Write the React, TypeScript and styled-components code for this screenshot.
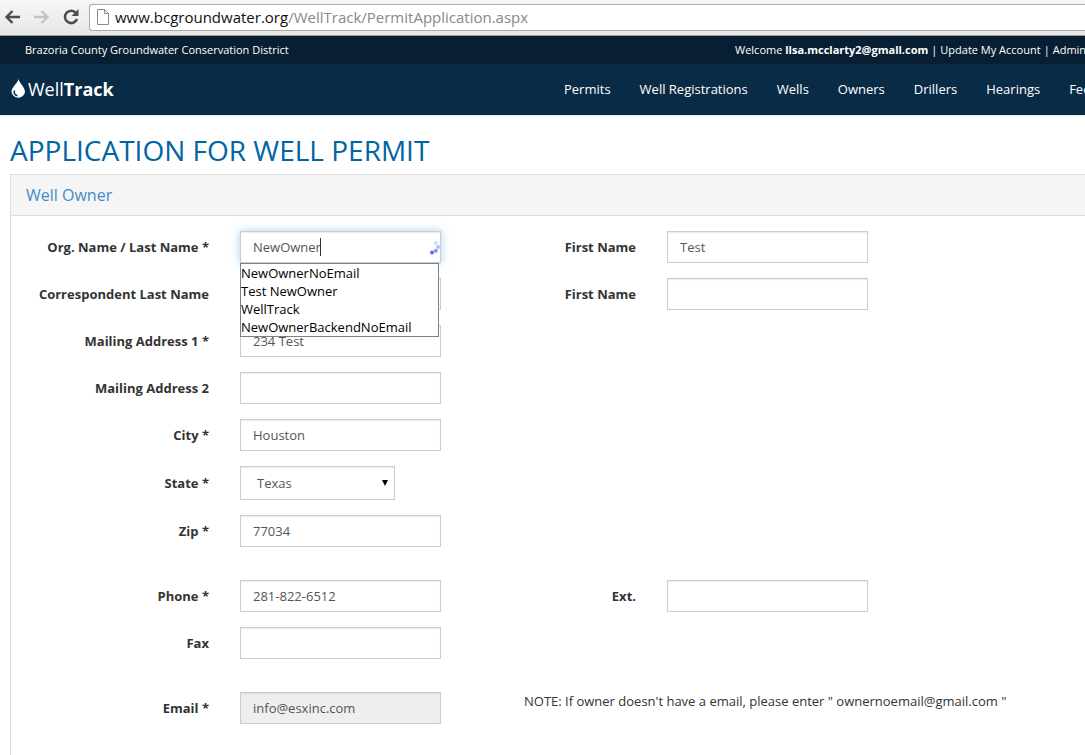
import React from "react";
import styled, { createGlobalStyle, css } from "styled-components";

const GlobalStyle = createGlobalStyle`
  * { box-sizing: border-box; }
  html, body { margin: 0; padding: 0; }
  body {
    font-family: "Open Sans", "Noto Sans", sans-serif;
    font-size: 13px;
    line-height: 20px;
    color: #333;
    background: #fff;
    overflow-x: hidden;
  }
`;

const Page = styled.div`
  display: flex;
  flex-direction: column;
  min-height: 100vh;
  overflow: hidden;
`;

const BrowserBar = styled.div`
  display: flex;
  align-items: center;
  height: 36px;
  padding: 0 0 1px 4px;
  background: linear-gradient(#f7f7f7, #e6e6e6);
  border-bottom: 1px solid #a0a0a0;
`;

const ToolButton = styled.button`
  display: flex;
  align-items: center;
  justify-content: center;
  width: 18px;
  height: 20px;
  margin-right: 11px;
  padding: 0;
  border: 0;
  background: none;
`;

const AddressBox = styled.div`
  display: flex;
  flex: 1;
  align-items: center;
  gap: 6px;
  height: 27px;
  margin-left: -2px;
  padding-left: 7px;
  background: #fff;
  border: 1px solid #aaa;
  border-right: 0;
  border-radius: 3px 0 0 3px;
`;

const Address = styled.div`
  font-size: 15px;
  color: #888;
  white-space: nowrap;

  b {
    font-weight: 400;
    color: #111;
  }
`;

const TopBar = styled.div`
  display: flex;
  align-items: center;
  height: 28px;
  padding-left: 25px;
  font-size: 11px;
  color: #fff;
  background: #081f33;
  white-space: nowrap;
`;

const District = styled.div`
  flex: 0 0 710px;
`;

const Account = styled.div`
  display: flex;
  flex: none;
  gap: 3px;
`;

const PlainLink = styled.a`
  color: inherit;
  text-decoration: none;
`;

const Header = styled.header`
  display: flex;
  align-items: center;
  height: 51px;
  padding: 0 0 2px 10px;
  color: #fff;
  background: #0a2b46;
`;

const Brand = styled.a`
  display: flex;
  flex: 0 0 554px;
  align-items: center;
  gap: 2px;
  font-size: 18px;
  color: #fff;
  text-decoration: none;
`;

const Nav = styled.nav`
  display: flex;
  flex: none;
  gap: 29px;
  white-space: nowrap;
`;

const Main = styled.main`
  display: flex;
  flex: 1;
  flex-direction: column;
  padding-left: 10px;
  border-top: 1px solid #eee;
`;

const Title = styled.h1`
  margin: 14px 0 4px;
  font-size: 28px;
  font-weight: 400;
  line-height: 40px;
  color: #0065a4;
`;

const Panel = styled.section`
  flex: 1;
  border: 1px solid #ddd;
  border-width: 1px 0 0 1px;
`;

const PanelTitle = styled.h2`
  margin: 0;
  padding: 10px 15px;
  font-size: 16px;
  font-weight: 400;
  line-height: 20px;
  color: #428bca;
  background: #f5f5f5;
  border-bottom: 1px solid #ddd;
`;

const Form = styled.form`
  display: flex;
  flex-direction: column;
  gap: 15px;
  padding: 15px 0 30px;
`;

const Row = styled.div<{ $spaced?: boolean }>`
  display: grid;
  grid-template-columns: 199px 201px 166px 201px 1fr;
  column-gap: 30px;
  align-items: center;
  margin-top: ${(p) => (p.$spaced ? 18 : 0)}px;
`;

const Label = styled.label`
  padding-right: 1px;
  font-weight: 700;
  text-align: right;
  white-space: nowrap;
`;

const Field = styled.div`
  position: relative;
`;

const control = css`
  display: block;
  font: inherit;
  color: #555;
  background: #fff;
  border: 1px solid #ccc;
  border-radius: 0;
  box-shadow: inset 0 1px 1px rgba(0, 0, 0, 0.08);
  outline: 0;
`;

const Input = styled.input<{ $active?: boolean }>`
  ${control}
  width: 100%;
  height: 32px;
  padding: 0 12px;

  &:read-only {
    background: #eee;
  }

  ${(p) =>
    p.$active &&
    css`
      box-shadow: inset 0 1px 1px rgba(0, 0, 0, 0.08), 0 0 8px rgba(102, 175, 233, 0.6);
    `}
`;

const SelectField = styled(Field)`
  width: 155px;
`;

const Select = styled.select`
  ${control}
  width: 100%;
  height: 34px;
  padding: 0 16px;
  appearance: none;
`;

const SelectArrow = styled.svg`
  position: absolute;
  top: 14px;
  right: 7px;
  pointer-events: none;
`;

const Caret = styled.span`
  position: absolute;
  top: 7px;
  left: 80px;
  width: 1px;
  height: 18px;
  background: #333;
`;

const Spinner = styled.svg`
  position: absolute;
  top: 8px;
  right: 0;
`;

const Suggestions = styled.ul`
  position: absolute;
  z-index: 1;
  top: 32px;
  left: 0;
  width: 199px;
  margin: 0;
  padding: 0;
  list-style: none;
  line-height: 18px;
  color: #000;
  background: #fff;
  border: 1px solid #808080;
`;

const Note = styled.p`
  grid-column: 3 / -1;
  align-self: start;
  margin: 0;
  padding-left: 53px;
  line-height: 18px;
`;

type TextFieldProps = { id: string; label: string; value?: string; readOnly?: boolean };

function TextField({ id, label, value = "", readOnly }: TextFieldProps) {
  return (
    <>
      <Label htmlFor={id}>{label}</Label>
      <Field>
        <Input id={id} type="text" defaultValue={value} readOnly={readOnly} />
      </Field>
    </>
  );
}

const navItems = ["Permits", "Well Registrations", "Wells", "Owners", "Drillers", "Hearings", "Fees"];
const suggestions = ["NewOwnerNoEmail", "Test NewOwner", "WellTrack", "NewOwnerBackendNoEmail"];

export default function App() {
  return (
    <Page>
      <GlobalStyle />
      <BrowserBar>
        <ToolButton aria-label="Back">
          <svg width="18" height="16" viewBox="0 0 18 16" fill="none" stroke="#4d4d4d" strokeWidth="2.4">
            <path d="M16 8H3M8.5 2L2.5 8l6 6" />
          </svg>
        </ToolButton>
        <ToolButton aria-label="Forward">
          <svg width="18" height="16" viewBox="0 0 18 16" fill="none" stroke="#c3c3c3" strokeWidth="2.4">
            <path d="M1 8h13M8.5 2l6 6-6 6" />
          </svg>
        </ToolButton>
        <ToolButton aria-label="Reload">
          <svg width="18" height="18" viewBox="0 0 18 18" fill="none" stroke="#4d4d4d" strokeWidth="2.6">
            <path d="M14 5A6.2 6.2 0 1 0 15 11" />
            <path d="M16.5 1v7H9.5z" fill="#4d4d4d" stroke="none" />
          </svg>
        </ToolButton>
        <AddressBox>
          <svg width="12" height="16" viewBox="0 0 12 16" fill="#fff" stroke="#8a8a8a">
            <path d="M.5.5h7l4 4v11H.5zM7.5.5v4h4" />
          </svg>
          <Address>
            <b>www.bcgroundwater.org</b>/WellTrack/PermitApplication.aspx
          </Address>
        </AddressBox>
      </BrowserBar>

      <TopBar>
        <District>Brazoria County Groundwater Conservation District</District>
        <Account>
          <span>
            Welcome <b>llsa.mcclarty2@gmall.com</b>
          </span>
          <span>|</span>
          <PlainLink href="#account">Update My Account</PlainLink>
          <span>|</span>
          <PlainLink href="#admin">Admin</PlainLink>
        </Account>
      </TopBar>

      <Header>
        <Brand href="#home">
          <svg width="16" height="20" viewBox="0 0 16 20">
            <path d="M8.5 0C9.5 4.5 15 8 15 13a6.8 6.5 0 0 1-13.5 0C1.5 8 7.5 4.5 8.5 0z" fill="#fff" />
            <path d="M4.5 11.5c-.8 3 .5 4.8 3 5.2" fill="none" stroke="#0a2b46" strokeWidth="1.5" />
          </svg>
          <span>
            Well<b>Track</b>
          </span>
        </Brand>
        <Nav>
          {navItems.map((item) => (
            <PlainLink key={item} href="#nav">
              {item}
            </PlainLink>
          ))}
        </Nav>
      </Header>

      <Main>
        <Title>APPLICATION FOR WELL PERMIT</Title>
        <Panel>
          <PanelTitle>Well Owner</PanelTitle>
          <Form>
            <Row>
              <Label htmlFor="orgName">Org. Name / Last Name *</Label>
              <Field>
                <Input id="orgName" type="text" defaultValue="NewOwner" $active />
                <Caret />
                <Spinner width="12" height="16" viewBox="0 0 12 16" fill="#6666ff">
                  <circle cx="3" cy="13.5" r="2" />
                  <circle cx="6.8" cy="11.7" r="2" opacity="0.75" />
                  <circle cx="9" cy="8" r="2" opacity="0.45" />
                  <circle cx="6.8" cy="4" r="2" opacity="0.25" />
                </Spinner>
                <Suggestions>
                  {suggestions.map((name) => (
                    <li key={name}>{name}</li>
                  ))}
                </Suggestions>
              </Field>
              <TextField id="ownerFirst" label="First Name" value="Test" />
            </Row>
            <Row>
              <TextField id="corrLast" label="Correspondent Last Name" />
              <TextField id="corrFirst" label="First Name" />
            </Row>
            <Row>
              <TextField id="address1" label="Mailing Address 1 *" value="234 Test" />
            </Row>
            <Row>
              <TextField id="address2" label="Mailing Address 2" />
            </Row>
            <Row>
              <TextField id="city" label="City *" value="Houston" />
            </Row>
            <Row>
              <Label htmlFor="state">State *</Label>
              <SelectField>
                <Select id="state" defaultValue="Texas">
                  <option>Texas</option>
                </Select>
                <SelectArrow width="6" height="6" viewBox="0 0 6 6">
                  <path d="M0 0h6L3 6z" fill="#000" />
                </SelectArrow>
              </SelectField>
            </Row>
            <Row>
              <TextField id="zip" label="Zip *" value="77034" />
            </Row>
            <Row $spaced>
              <TextField id="phone" label="Phone *" value="281-822-6512" />
              <TextField id="ext" label="Ext." />
            </Row>
            <Row>
              <TextField id="fax" label="Fax" />
            </Row>
            <Row $spaced>
              <TextField id="email" label="Email *" value="info@esxinc.com" readOnly />
              <Note>NOTE: If owner doesn't have a email, please enter " ownernoemail@gmail.com "</Note>
            </Row>
          </Form>
        </Panel>
      </Main>
    </Page>
  );
}
